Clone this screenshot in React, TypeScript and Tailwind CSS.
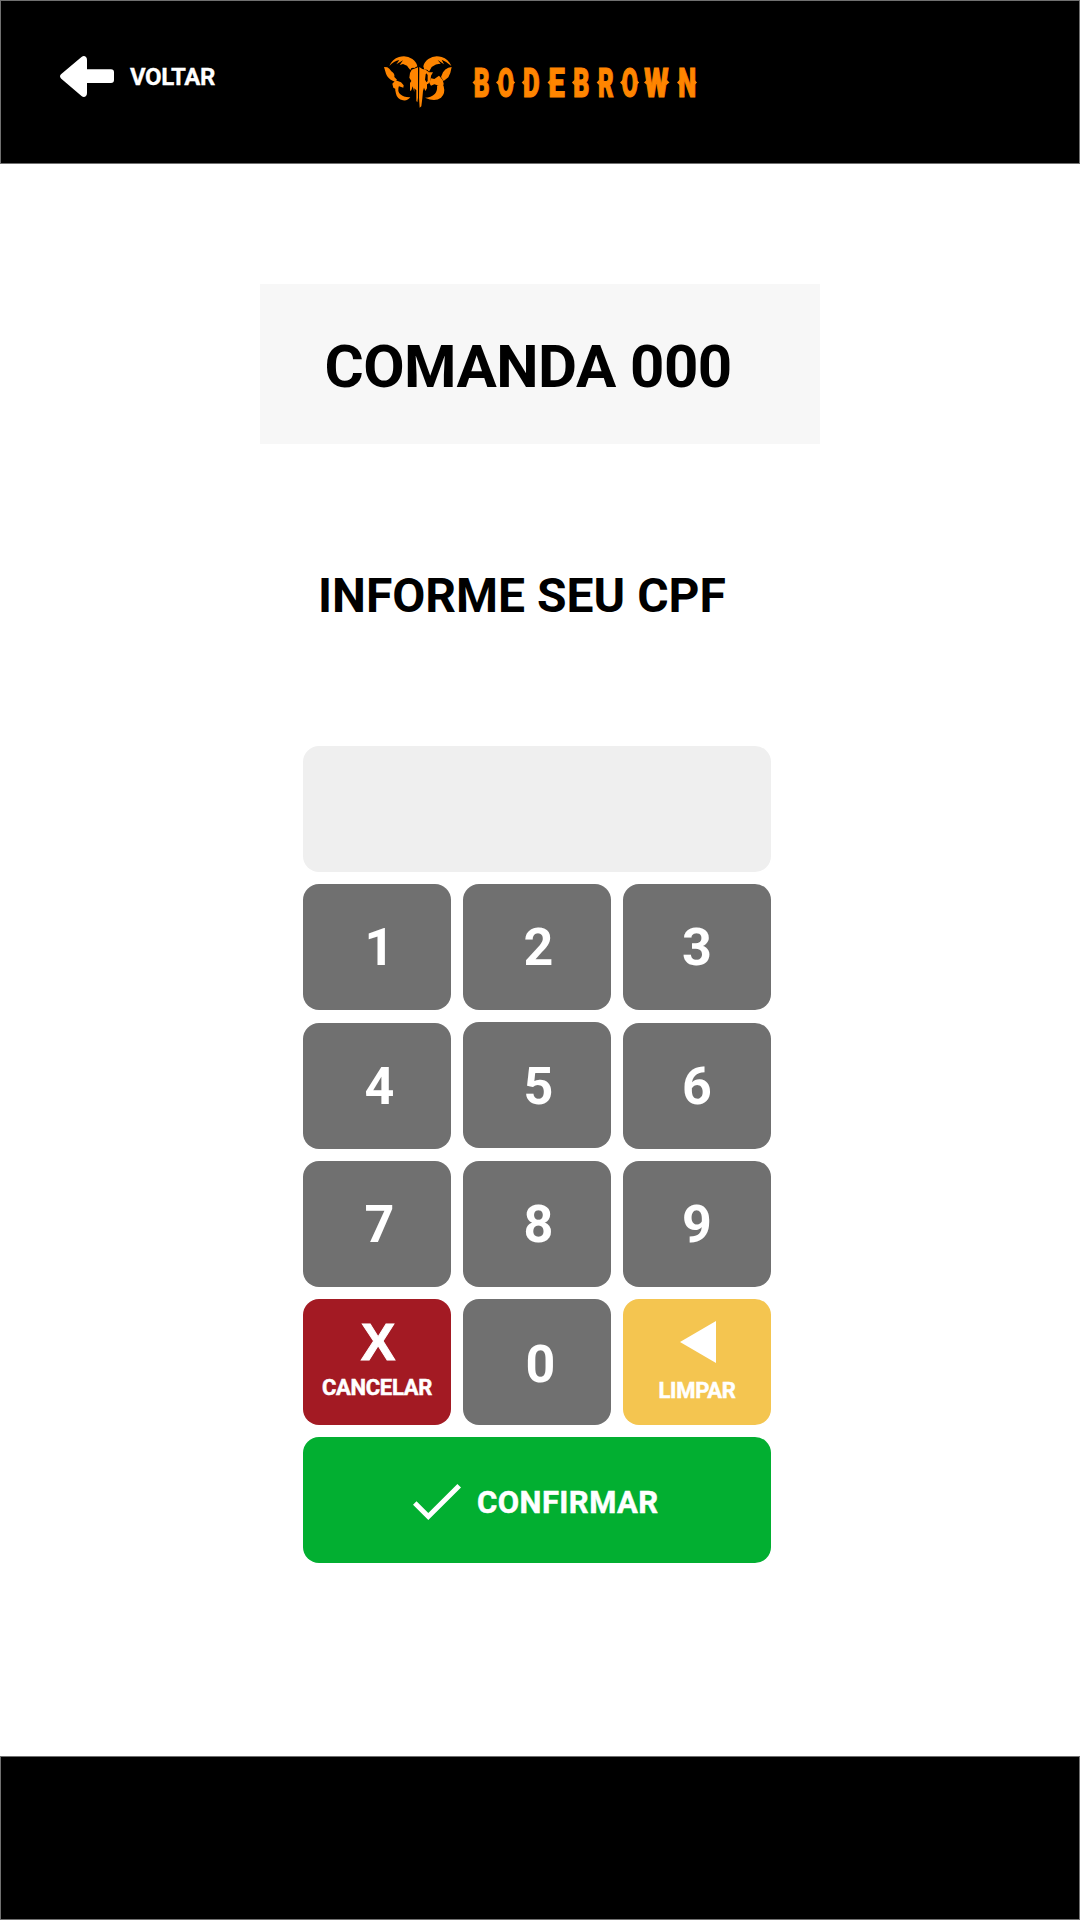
import React from "react";

function BackArrow() {
  return (
    <svg className="h-[42px] w-[54px]" viewBox="0 0 54 42" fill="#fff">
      <path d="M1 18.2 21.5 1Q24-.8 26 1Q27 2 27 4V13.3H51Q54 13.3 54 16.3V24Q54 27 51 27H27V37Q27 39 26 40Q24 42 21.5 40L1 22.5Q-1 20.3 1 18.2Z" />
    </svg>
  );
}

function Skull() {
  return (
    <svg className="h-[70px] w-[90px]" viewBox="0 0 270 210" fill="#ff8500">
      <path d="M43 63Q52 42 72 36Q94 29 112 42Q124 50 127 64L118 69Q108 66 106 75Q100 68 96 62L84 57L74 60L84 46L64 58L73 45Q56 48 43 63Z" />
      <path d="M229 63Q220 42 200 36Q178 29 160 42Q148 50 145 64L148 74Q157 71 162 80L170 66Q182 56 197 56L188 45L207 58L200 44Q216 50 229 63Z" />
      <path d="M27 66L37 67Q43 70 49 79Q60 86 58 96L66 104L60 110L53 107Q38 100 33 86Z" />
      <path d="M230 66L220 68Q210 72 204 82L198 96L202 102L206 108L220 97Q227 86 230 66Z" />
      <path d="M62 106L78 112L86 121L85 128L70 123L62 132L55 128L52 116Z" />
      <path d="M62 124L72 122Q66 138 76 148Q86 158 106 157Q98 168 84 166Q66 162 63 146Q59 134 62 124Z" />
      <path d="M198 118L206 124Q212 146 198 158Q180 172 150 158Q168 158 180 146Q188 136 186 122Z" />
      <path d="M133 66L142 72L152 74L160 80L152 88L150 104L156 114L156 130L151 138L147 128L144 138L142 160L139 184L134 188L132 158Z" />
      <path d="M129 67V158L127 172L124 168V136L118 130V141L113 124L109 136L105 138V114L109 108L103 98L105 84L110 74Z" />
      <path d="M150 78L162 82L174 82L168 92L166 110L158 118L152 114L158 108V90Z" />
      <path d="M168 100L178 102L192 92L203 104L206 116L204 126L192 122L178 118L168 122L163 114Z" />
    </svg>
  );
}

/* c: letter, x: left edge, w: drawn width, ink and lb: glyph width and left bearing in em */
const logoLetters = [
  { c: "B", x: 19.5, w: 14.8, ink: 0.56, lb: 0.05, spurs: "l" },
  { c: "O", x: 43, w: 15.2, ink: 0.61, lb: 0.035, spurs: "lr" },
  { c: "D", x: 68.7, w: 15.5, ink: 0.565, lb: 0.05, spurs: "l" },
  { c: "E", x: 94.5, w: 15.5, ink: 0.5, lb: 0.05, spurs: "l" },
  { c: "B", x: 118.9, w: 15, ink: 0.56, lb: 0.05, spurs: "l" },
  { c: "R", x: 143.6, w: 15.2, ink: 0.59, lb: 0.05, spurs: "l" },
  { c: "O", x: 167, w: 15.2, ink: 0.61, lb: 0.035, spurs: "lr" },
  { c: "W", x: 189, w: 25, ink: 0.86, lb: 0.01, spurs: "" },
  { c: "N", x: 224, w: 16, ink: 0.59, lb: 0.05, spurs: "lr" },
];

function Wordmark() {
  return (
    <svg className="h-[60px] w-[260px]" viewBox="0 0 260 60" fill="#ff8500">
      {logoLetters.map((l, i) => {
        const s = (l.w - 1) / (l.ink * 41);
        return (
          <g key={i}>
            <text
              transform={`translate(${l.x + 0.5 - l.lb * 41 * s} 47.3) scale(${s} 1)`}
              fontFamily="Roboto, sans-serif"
              fontWeight="900"
              fontSize="41"
              stroke="#ff8500"
              strokeWidth="1.2"
            >
              {l.c}
            </text>
            {l.spurs.includes("l") && <path d={`M${l.x + 1} 29.5l-3 3 3 3z`} />}
            {l.spurs.includes("r") && <path d={`M${l.x + l.w - 1} 29.5l3 3-3 3z`} />}
          </g>
        );
      })}
      <path d="M192 29.5l-3 3 4 3zM211.5 29.5l3 3-4 3z" />
    </svg>
  );
}

const key = "flex h-[126px] items-center justify-center rounded-2xl bg-[#707070] text-[52px] leading-none font-bold text-white";

export default function App() {
  return (
    <div className="flex h-[1920px] w-[1080px] flex-col bg-white font-['Roboto',sans-serif]">
      <header className="flex h-[164px] shrink-0 border border-[#707070] bg-black">
        <div className="ml-[59px] mt-[55px] flex h-[42px] w-[314px] items-center gap-4">
          <BackArrow />
          <span className="text-2xl leading-none font-bold tracking-[-0.45px] text-white [-webkit-text-stroke:0.3px_white]">VOLTAR</span>
        </div>
        <div className="mt-[44px] ml-px flex">
          <Skull />
          <div className="-ml-[10px] mt-[5px]">
            <Wordmark />
          </div>
        </div>
      </header>

      <main className="flex flex-1 flex-col">
        <section className="ml-[260px] mt-[120px] flex h-[160px] w-[560px] items-center bg-[#f7f7f7] pt-[5px] pl-[64.5px]">
          <h1 className="text-[60px] leading-none font-bold tracking-[-0.55px] text-black">COMANDA 000</h1>
        </section>
        <h2 className="ml-[318px] mt-[128px] text-[48px] leading-[48px] font-bold whitespace-nowrap text-black">INFORME SEU CPF</h2>

        <div className="mt-[126px] ml-[303px] grid w-[468px] grid-cols-3 gap-3">
          <div className="col-span-3 h-[126px] rounded-2xl bg-[#efefef]" />
          <button className={`${key} pt-px pl-[5px]`}>1</button>
          <button className={`${key} pt-px pl-[3px]`}>2</button>
          <button className={`${key} pt-px`}>3</button>
          <button className={`${key} mt-px pt-px pl-[5px]`}>4</button>
          <button className={`${key} pt-[3px] pl-[3px]`}>5</button>
          <button className={`${key} mt-px pt-px`}>6</button>
          <button className={`${key} pt-px pl-[5px]`}>7</button>
          <button className={`${key} pt-px pl-[3px]`}>8</button>
          <button className={`${key} pt-px`}>9</button>
          <button className="flex h-[126px] flex-col items-center rounded-2xl bg-[#a31a23] pt-[18px] font-bold text-white">
            <span className="ml-0.5 font-['Liberation_Sans',sans-serif] text-[52px] leading-[50px] [-webkit-text-stroke:0.9px_white]">X</span>
            <span className="mt-[9px] text-[22px] leading-[24px] tracking-[-0.3px] [-webkit-text-stroke:0.5px_white]">CANCELAR</span>
          </button>
          <button className={`${key} pt-[5px] pl-[7px]`}>0</button>
          <button className="flex h-[126px] flex-col items-center rounded-2xl bg-[#f4c550] pt-[22px] font-bold text-white">
            <svg className="ml-0.5 h-[42px] w-9" viewBox="0 0 36 42" fill="#fff">
              <path d="M0 21 36 0V42Z" />
            </svg>
            <span className="mt-4 text-[22px] leading-[24px] tracking-[-0.3px] [-webkit-text-stroke:0.5px_white]">LIMPAR</span>
          </button>
          <button className="col-span-3 flex h-[126px] items-center rounded-2xl bg-[#02af31] pl-[110px] text-white">
            <svg className="mt-[3px] h-[36px] w-[48px]" viewBox="0 0 48 36" fill="#fff">
              <path d="M0 20.8 3.5 17.2 15.3 29 44.4 0 48 3.6 15.3 36Z" />
            </svg>
            <span className="ml-4 pt-1 text-[31px] leading-none font-bold tracking-[0.45px] [-webkit-text-stroke:0.5px_white]">CONFIRMAR</span>
          </button>
        </div>
      </main>

      <footer className="h-[164px] shrink-0 border border-[#707070] bg-black" />
    </div>
  );
}
